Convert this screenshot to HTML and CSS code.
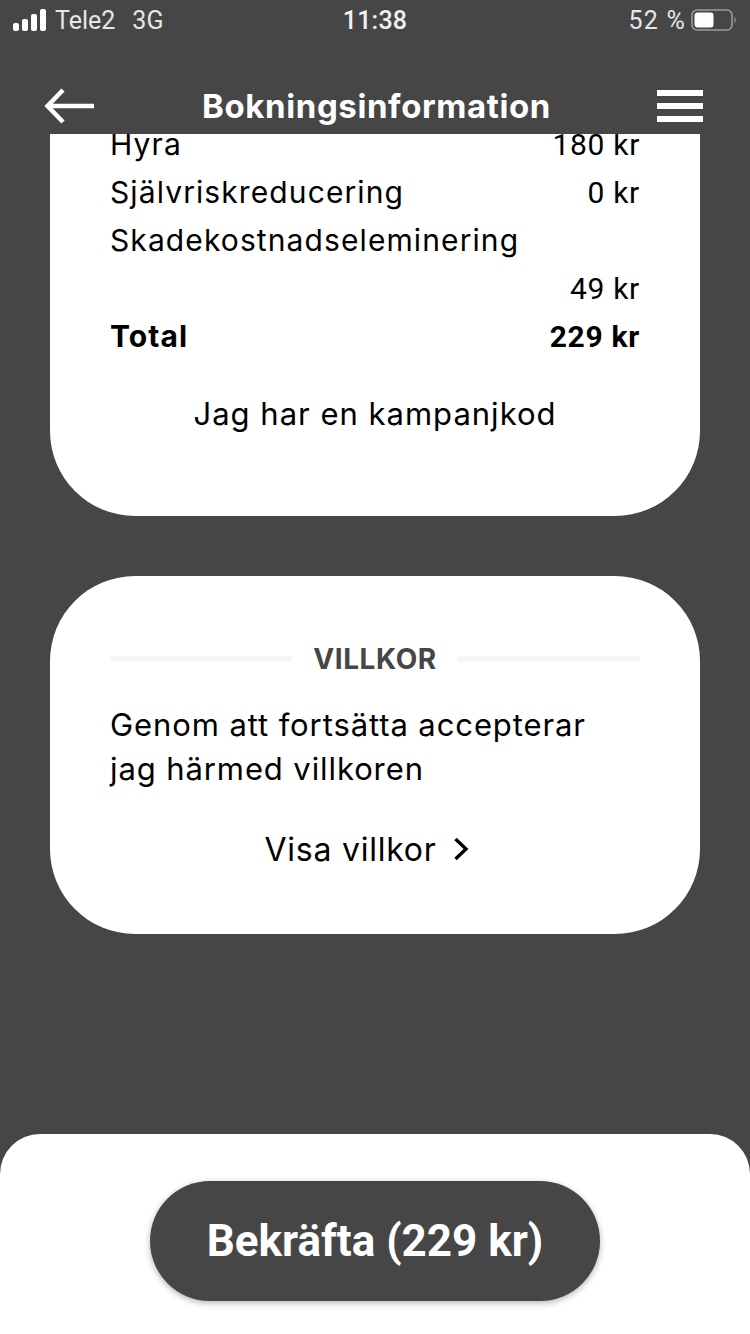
FILE: index.html
```html
<!DOCTYPE html>
<html>
  <head>
    <title>Bokningsinformation</title>
    <link rel="stylesheet" href="styles.css">
  </head>
  <body>
    <div class="phone">
      <div class="status">
        <div class="status-left">
          <svg class="signal" width="34" height="22" viewBox="0 0 34 22">
            <rect x="0" y="14" width="6" height="8" rx="2"/>
            <rect x="9" y="10" width="6" height="12" rx="2"/>
            <rect x="18" y="5" width="6" height="17" rx="2"/>
            <rect x="27" y="0" width="6" height="22" rx="2"/>
          </svg>
          <span class="carrier">Tele2</span>
          <span class="net">3G</span>
        </div>
        <div class="clock">11:38</div>
        <div class="status-right">
          <span>52 %</span>
          <svg width="46" height="24" viewBox="0 0 46 24">
            <rect x="1" y="2" width="40" height="20" rx="5" fill="none" stroke="#9a9a9a" stroke-width="1.6"/>
            <rect x="3.500" y="4.500" width="19" height="15" rx="3" fill="#fff"/>
            <path d="M43.500 8.500c1.500.6 1.500 6.400 0 7z" fill="#9a9a9a"/>
          </svg>
        </div>
      </div>

      <div class="header">
        <svg class="back" width="52" height="38" viewBox="0 0 52 38">
          <path d="M50 19H4M19 3L3.500 19L19 35" fill="none" stroke="#fff" stroke-width="4.500"/>
        </svg>
        <h1>Bokningsinformation</h1>
        <div class="burger"><i></i><i></i><i></i></div>
      </div>

      <div class="content">
        <div class="card card-price">
          <div class="row"><span>Hyra</span><span class="num">180 kr</span></div>
          <div class="row"><span>Självriskreducering</span><span class="num">0 kr</span></div>
          <div class="row"><span>Skadekostnadseleminering</span></div>
          <div class="row"><span></span><span class="num">49 kr</span></div>
          <div class="row total"><span>Total</span><span class="num">229 kr</span></div>
          <div class="code">Jag har en kampanjkod</div>
        </div>

        <div class="card card-terms">
          <div class="divider"><b>VILLKOR</b></div>
          <p>Genom att fortsätta accepterar<br>jag härmed villkoren</p>
          <div class="show">
            <span>Visa villkor</span>
            <svg width="16" height="24" viewBox="0 0 16 24">
              <path d="M2.500 2L13 12L2.500 22" fill="none" stroke="#000" stroke-width="3.400"/>
            </svg>
          </div>
        </div>
      </div>

      <div class="footer">
        <div class="confirm">Bekräfta (229 kr)</div>
      </div>
    </div>
  </body>
</html>
```

FILE: styles.css
```css
* { box-sizing: border-box; }

body { margin: 0; background: #464646; }

.phone {
  width: 750px;
  height: 1334px;
  background: #464646;
  display: flex;
  flex-direction: column;
  overflow: hidden;
  font-family: "Inter", "Liberation Sans", sans-serif;
}

/* status bar */
.status {
  height: 42px;
  padding: 0 13px 2px 13px;
  display: flex;
  align-items: center;
  justify-content: space-between;
  color: #e6e6e6;
  font-family: "Roboto", sans-serif;
  font-size: 25px;
}
.status-left { display: flex; align-items: center; width: 200px; }
.signal { fill: #fff; margin-right: 8px; }
.net { margin-left: 17px; }
.clock { font-weight: 500; letter-spacing: 0.2px; color: #f2f2f2; }
.status-right { display: flex; align-items: center; justify-content: flex-end; gap: 5px; width: 200px; letter-spacing: 1.2px; }

/* header */
.header {
  height: 92px;
  padding: 36px 47px 0 44px;
  display: flex;
  align-items: center;
  justify-content: space-between;
}
.header h1 {
  margin: 0;
  color: #fff;
  font-size: 33px;
  font-weight: 700;
  letter-spacing: 0.6px;
}
.burger { width: 46px; display: flex; flex-direction: column; gap: 7px; }
.burger i { display: block; height: 6px; background: #fff; }

/* scrolled content, first card is cut by the header */
.content { flex: 1; overflow: hidden; }

.card {
  width: 650px;
  margin: 0 auto;
  background: #fff;
  border-radius: 85px;
  padding: 0 60px;
  color: #000;
}
.card-price { margin-top: -90px; padding-top: 76px; height: 472px; }
.card-terms { margin-top: 60px; height: 358px; padding-top: 61px; }

.row {
  height: 48px;
  display: flex;
  align-items: center;
  justify-content: space-between;
  font-size: 30px;
  letter-spacing: 1.1px;
}
.row .num { font-family: "Roboto", sans-serif; font-size: 30px; letter-spacing: 0.7px; }
.total { font-weight: 700; }
.total .num { font-weight: 700; }

.code {
  margin-top: 30px;
  height: 48px;
  line-height: 48px;
  text-align: center;
  font-size: 31px;
  letter-spacing: 1px;
}

.divider {
  display: flex;
  align-items: center;
  gap: 21px;
  height: 44px;
  color: #464646;
  font-size: 28px;
  letter-spacing: 0.6px;
}
.divider::before,
.divider::after {
  content: "";
  flex: 1;
  height: 6px;
  background: #f6f6f6;
}

.card-terms p {
  margin: 22px 0 0;
  font-size: 31px;
  line-height: 44px;
  letter-spacing: 0.9px;
}

.show {
  margin-top: 34px;
  padding-right: 17px;
  display: flex;
  align-items: center;
  justify-content: center;
  gap: 16px;
  height: 48px;
  font-size: 32px;
  letter-spacing: 0.75px;
}

/* bottom bar */
.footer {
  height: 200px;
  background: #fff;
  border-radius: 40px 40px 0 0;
  padding-top: 47px;
}
.confirm {
  width: 450px;
  height: 120px;
  margin: 0 auto;
  border-radius: 60px;
  background: #464646;
  color: #fff;
  font-family: "Roboto", sans-serif;
  font-size: 44px;
  font-weight: 700;
  display: flex;
  align-items: center;
  justify-content: center;
  box-shadow: 0 2px 6px rgba(0, 0, 0, 0.3);
}
```
